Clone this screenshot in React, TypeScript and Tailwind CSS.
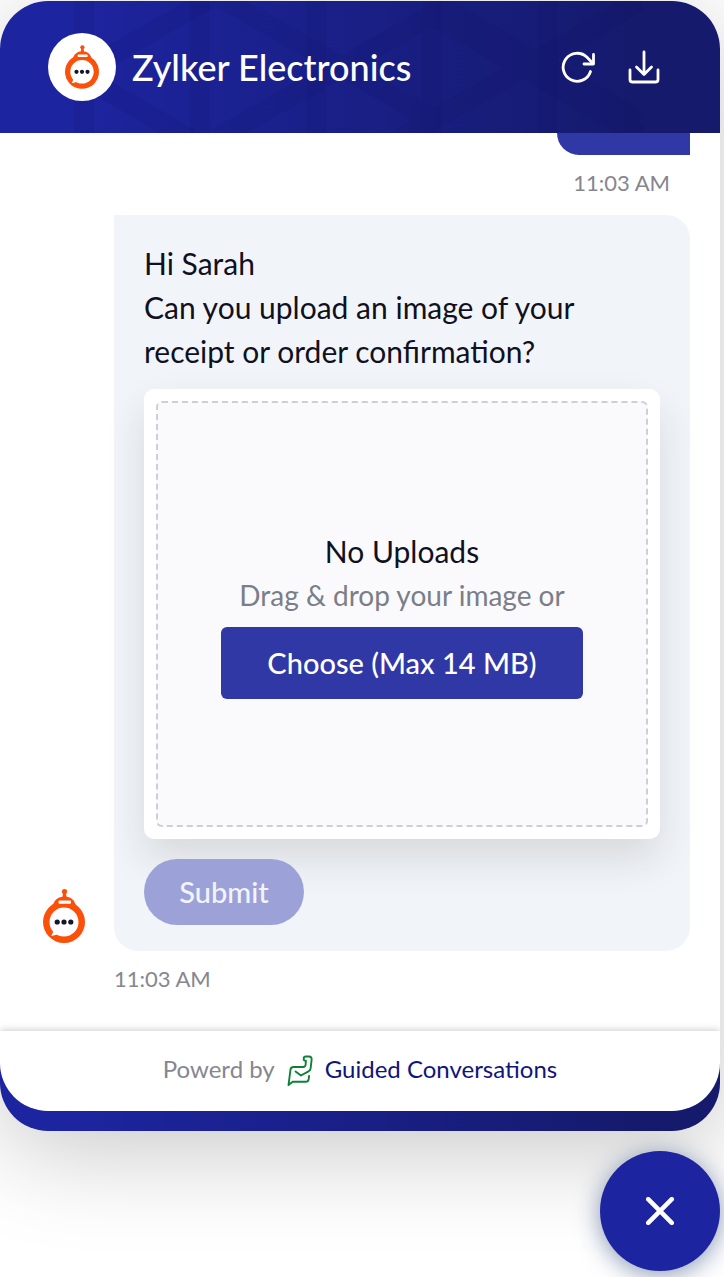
import type { ReactNode } from "react";

interface MascotProps {
  className?: string;
}

const Mascot = ({ className }: MascotProps) => {
  return (
    <svg viewBox="0 0 42 54" className={className} aria-hidden="true">
      <circle cx="21.5" cy="2.6" r="2.6" fill="#fb4f0a" />
      <path d="M20.3 3h2.4l1 6h-4.4z" fill="#fb4f0a" />
      <path d="M9.500 18c1.200-7 5.500-10.500 12-10.500S32 11 33 18z" fill="#fb4f0a" />
      <circle cx="21" cy="33" r="21" fill="#fb4f0a" />
      <rect x="15.500" y="11.500" width="12.500" height="3.200" rx="1.200" fill="#fff" />
      <circle cx="21" cy="33" r="14.500" fill="#fff" />
      <path d="M9.500 40l.8 2.500-2 4.500 6.200-1.600 4 .6z" fill="#fff" />
      <circle cx="14.200" cy="33" r="2.600" fill="#16162a" />
      <circle cx="21" cy="33" r="2.600" fill="#16162a" />
      <circle cx="27.800" cy="33" r="2.600" fill="#16162a" />
    </svg>
  );
};

const HeaderPattern = () => {
  return (
    <svg
      viewBox="0 0 720 132"
      preserveAspectRatio="xMidYMid slice"
      className="absolute inset-0 h-full w-full"
      fill="none"
      stroke="#14145f"
      strokeOpacity="0.12"
      strokeWidth="20"
      aria-hidden="true"
    >
      <path d="M84 0v132M200 0v132M316 0v132M432 0v132M548 0v132" />
      <path d="M84 70L216 -6L432 118M216 138L432 14L640 134M84 76L190 138M400 138L640 0M432 0L640 120" />
    </svg>
  );
};

const GuidedLogo = () => {
  return (
    <svg
      viewBox="0 0 26 32"
      className="mt-1 h-8 w-[26px]"
      fill="none"
      stroke="#0b8238"
      strokeWidth="1.900"
      strokeLinecap="round"
      strokeLinejoin="round"
      aria-hidden="true"
    >
      <path d="M8.500 16.500l5.500 4 7.500-4.200c1.300-.8 1.900-1.500 2.100-3l1-8.500c.2-2.200-.6-3.300-2.500-3.300h-3.300c-1.500 0-2 .6-2.100 1.800-.2 1.500.3 2.200 1.500 2.400l.7.100-.3 4c-.1 1.300-1 2.200-2.400 2.200H6.500c-1.900 0-2.700.9-3 2.500L1.500 30l4.200-3.200h13c1.800 0 2.700-.8 2.900-2.400l.5-3.400" />
    </svg>
  );
};

interface HeaderButtonProps {
  label: string;
  children: ReactNode;
}

const HeaderButton = ({ label, children }: HeaderButtonProps) => {
  return (
    <button type="button" aria-label={label} className="flex h-9 w-9 items-center justify-center text-white">
      <svg
        viewBox="0 0 36 36"
        className="h-9 w-9"
        fill="none"
        stroke="currentColor"
        strokeWidth="2.800"
        strokeLinecap="round"
        strokeLinejoin="round"
        aria-hidden="true"
      >
        {children}
      </svg>
    </button>
  );
};

const ChatHeader = () => {
  return (
    <header className="relative flex h-[132px] items-center">
      <HeaderPattern />
      <div className="relative flex w-full items-center pr-[58px] pl-12">
        <div className="flex h-[68px] w-[68px] items-center justify-center rounded-full bg-white">
          <Mascot className="h-11 w-[34px]" />
        </div>
        <h1 className="ml-4 flex-1 text-[36px] leading-[44px] font-medium text-white">Zylker Electronics</h1>
        <div className="flex gap-[30px]">
          <HeaderButton label="Restart conversation">
            <path d="M30.500 22.500a14 14 0 1 1-3.500-14.200L33 14.500" />
            <path d="M33.500 5.500v9.500H24" />
          </HeaderButton>
          <HeaderButton label="Download conversation">
            <path d="M18 3v22M10.500 18l7.500 7.500 7.500-7.500" />
            <path d="M4 21v9.500q0 2.500 2.500 2.500h23q2.500 0 2.500-2.500V21" />
          </HeaderButton>
        </div>
      </div>
    </header>
  );
};

const UploadCard = () => {
  return (
    <div className="mt-4 rounded-[10px] bg-white p-3 shadow-[0_20px_40px_rgba(30,20,0,0.12)]">
      <div className="flex h-[426px] flex-col items-center justify-center rounded-md border-2 border-dashed border-[#cdced6] bg-[#fafafd]">
        <p className="leading-11 text-[#101020]">No Uploads</p>
        <p className="text-[28px] leading-11 text-[#7b7e86]">Drag &amp; drop your image or</p>
        <button
          type="button"
          className="mt-[10px] h-[72px] w-[362px] max-w-full rounded-md bg-[#3038a6] text-[29px] font-medium text-white"
        >
          Choose (Max 14 MB)
        </button>
      </div>
    </div>
  );
};

export default function App() {
  return (
    <main className="flex flex-col overflow-hidden bg-white pt-px pr-1 pb-[6px] font-['Lato',sans-serif]">
      <section className="rounded-[48px] bg-linear-to-r from-[#1d249f] from-10% to-[#151a6c] to-90% pb-5 shadow-[0_20px_100px_rgba(0,0,0,0.22)]">
        <div className="overflow-hidden rounded-t-[48px]">
          <ChatHeader />
        </div>
        <div className="overflow-hidden rounded-b-[48px] bg-white">
          <div className="flex flex-col pr-[30px] pb-9">
            <div className="h-[22px] w-[133px] self-end rounded-bl-3xl bg-[#3038a6]" />
            <time className="mt-3 mb-4 self-end pr-5 text-[22px] leading-8 text-[#86868f]">11:03 AM</time>
            <div className="flex items-end">
              <div className="flex w-[114px] shrink-0 pb-2 pl-[43px]">
                <Mascot className="h-[54px] w-[42px]" />
              </div>
              <div className="flex-1 rounded-[24px] rounded-tl-none bg-[#f1f5fa] px-[30px] pt-[26px] pb-[26px] text-[30px]">
                <p className="leading-11 text-[#101020]">
                  Hi Sarah
                  <br />
                  Can you upload an image of your receipt or order confirmation?
                </p>
                <UploadCard />
                <button
                  type="button"
                  disabled
                  className="relative mt-5 block h-[66px] w-40 rounded-full bg-[#9ca2d8] text-[29px] font-medium text-[#f3f4fb]"
                >
                  Submit
                </button>
              </div>
            </div>
            <time className="mt-3 ml-[114px] text-[22px] leading-8 text-[#86868f]">11:03 AM</time>
          </div>
          <footer className="flex h-20 items-center justify-center pb-1 text-[24px] leading-8 shadow-[0_0_8px_rgba(0,0,0,0.25)]">
            <span className="text-[#86868f]">Powerd by</span>
            <a href="#guided-conversations" className="ml-3 flex items-center gap-3 text-[#10157a]">
              <GuidedLogo />
              Guided Conversations
            </a>
          </footer>
        </div>
      </section>
      <button
        type="button"
        aria-label="Close chat"
        className="relative mt-5 flex h-[120px] w-[120px] items-center justify-center self-end rounded-full bg-[#1d249f] text-white shadow-[0_4px_24px_rgba(20,50,110,0.5)]"
      >
        <svg
          viewBox="0 0 28 28"
          className="h-7 w-7"
          fill="none"
          stroke="currentColor"
          strokeWidth="4.500"
          strokeLinecap="round"
          aria-hidden="true"
        >
          <path d="M2.200 2.200l23.600 23.600M25.800 2.200L2.200 25.800" />
        </svg>
      </button>
    </main>
  );
}
